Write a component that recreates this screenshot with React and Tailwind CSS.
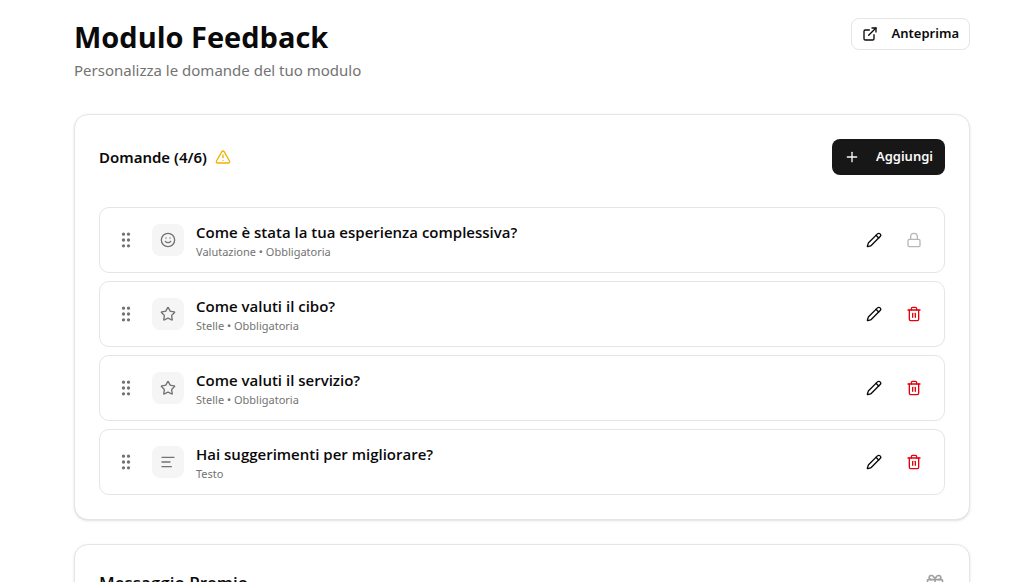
import React from "react";
import {
  ExternalLink,
  Gift,
  GripVertical,
  Lock,
  Pencil,
  Plus,
  Smile,
  Star,
  TextAlignStart,
  Trash2,
  TriangleAlert,
} from "lucide-react";

const MAX_QUESTIONS = 6;

const questions = [
  { id: 1, title: "Come è stata la tua esperienza complessiva?", meta: "Valutazione • Obbligatoria", icon: Smile, locked: true },
  { id: 2, title: "Come valuti il cibo?", meta: "Stelle • Obbligatoria", icon: Star },
  { id: 3, title: "Come valuti il servizio?", meta: "Stelle • Obbligatoria", icon: Star },
  { id: 4, title: "Hai suggerimenti per migliorare?", meta: "Testo", icon: TextAlignStart },
];

const Card = ({ children }) => (
  <section className="rounded-[14px] border border-neutral-200 bg-white p-6 shadow-sm">
    {children}
  </section>
);

const QuestionRow = ({ question }) => {
  const Icon = question.icon;

  return (
    <li className="flex items-center gap-3 rounded-[10px] border border-neutral-200 p-3">
      <button type="button" aria-label="Riordina" className="cursor-grab p-1 text-neutral-500">
        <GripVertical className="size-5" />
      </button>
      <div className="flex min-w-0 flex-1 items-center gap-3">
        <div className="flex size-8 items-center justify-center rounded-lg bg-neutral-100 text-neutral-500">
          <Icon className="size-4" />
        </div>
        <div className="min-w-0">
          <p className="truncate font-['Open_Sans',sans-serif] text-[15px] leading-6 font-semibold">{question.title}</p>
          <p className="text-[11px] leading-4 text-neutral-500">{question.meta}</p>
        </div>
      </div>
      <div className="flex gap-1">
        <button type="button" aria-label="Modifica" className="flex h-8 w-9 items-center justify-center rounded-md">
          <Pencil className="size-4" />
        </button>
        {question.locked ? (
          <button type="button" disabled aria-label="Bloccata" className="flex h-8 w-9 items-center justify-center rounded-md text-neutral-500 opacity-50">
            <Lock className="size-4" />
          </button>
        ) : (
          <button type="button" aria-label="Elimina" className="flex h-8 w-9 items-center justify-center rounded-md text-red-600">
            <Trash2 className="size-4" />
          </button>
        )}
      </div>
    </li>
  );
};

const App = () => {
  return (
    <main className="flex flex-col gap-6 bg-white pt-[18px] pr-16 pb-6 pl-[74px] font-['Noto_Sans',sans-serif] text-neutral-950">
      <header className="mb-2 flex items-start justify-between">
        <div>
          <h1 className="mb-0.5 font-['Open_Sans',sans-serif] text-[29px] leading-[38px] font-bold">Modulo Feedback</h1>
          <p className="text-[15px] leading-6 text-neutral-500">Personalizza le domande del tuo modulo</p>
        </div>
        <button type="button" className="flex h-8 items-center gap-3.5 rounded-lg border border-neutral-200 px-2.5 text-[13px] font-semibold">
          <ExternalLink className="size-4" />
          Anteprima
        </button>
      </header>

      <Card>
        <div className="mb-8 flex items-center justify-between">
          <div className="flex items-center gap-2">
            <h2 className="text-[15px] leading-6 font-semibold">
              Domande ({questions.length}/{MAX_QUESTIONS})
            </h2>
            <TriangleAlert className="size-4 text-yellow-500" />
          </div>
          <button type="button" className="flex h-9 items-center gap-4 rounded-lg bg-neutral-900 px-3 text-[13px] font-semibold text-neutral-50">
            <Plus className="size-4" />
            Aggiungi
          </button>
        </div>
        <ul className="flex flex-col gap-2">
          {questions.map((question) => (
            <QuestionRow key={question.id} question={question} />
          ))}
        </ul>
      </Card>

      <Card>
        <div className="flex items-center justify-between">
          <h2 className="font-['Open_Sans',sans-serif] text-[17px] leading-7 font-semibold">Messaggio Premio</h2>
          <Gift className="size-5 text-neutral-400" />
        </div>
      </Card>
    </main>
  );
};

export default App;
